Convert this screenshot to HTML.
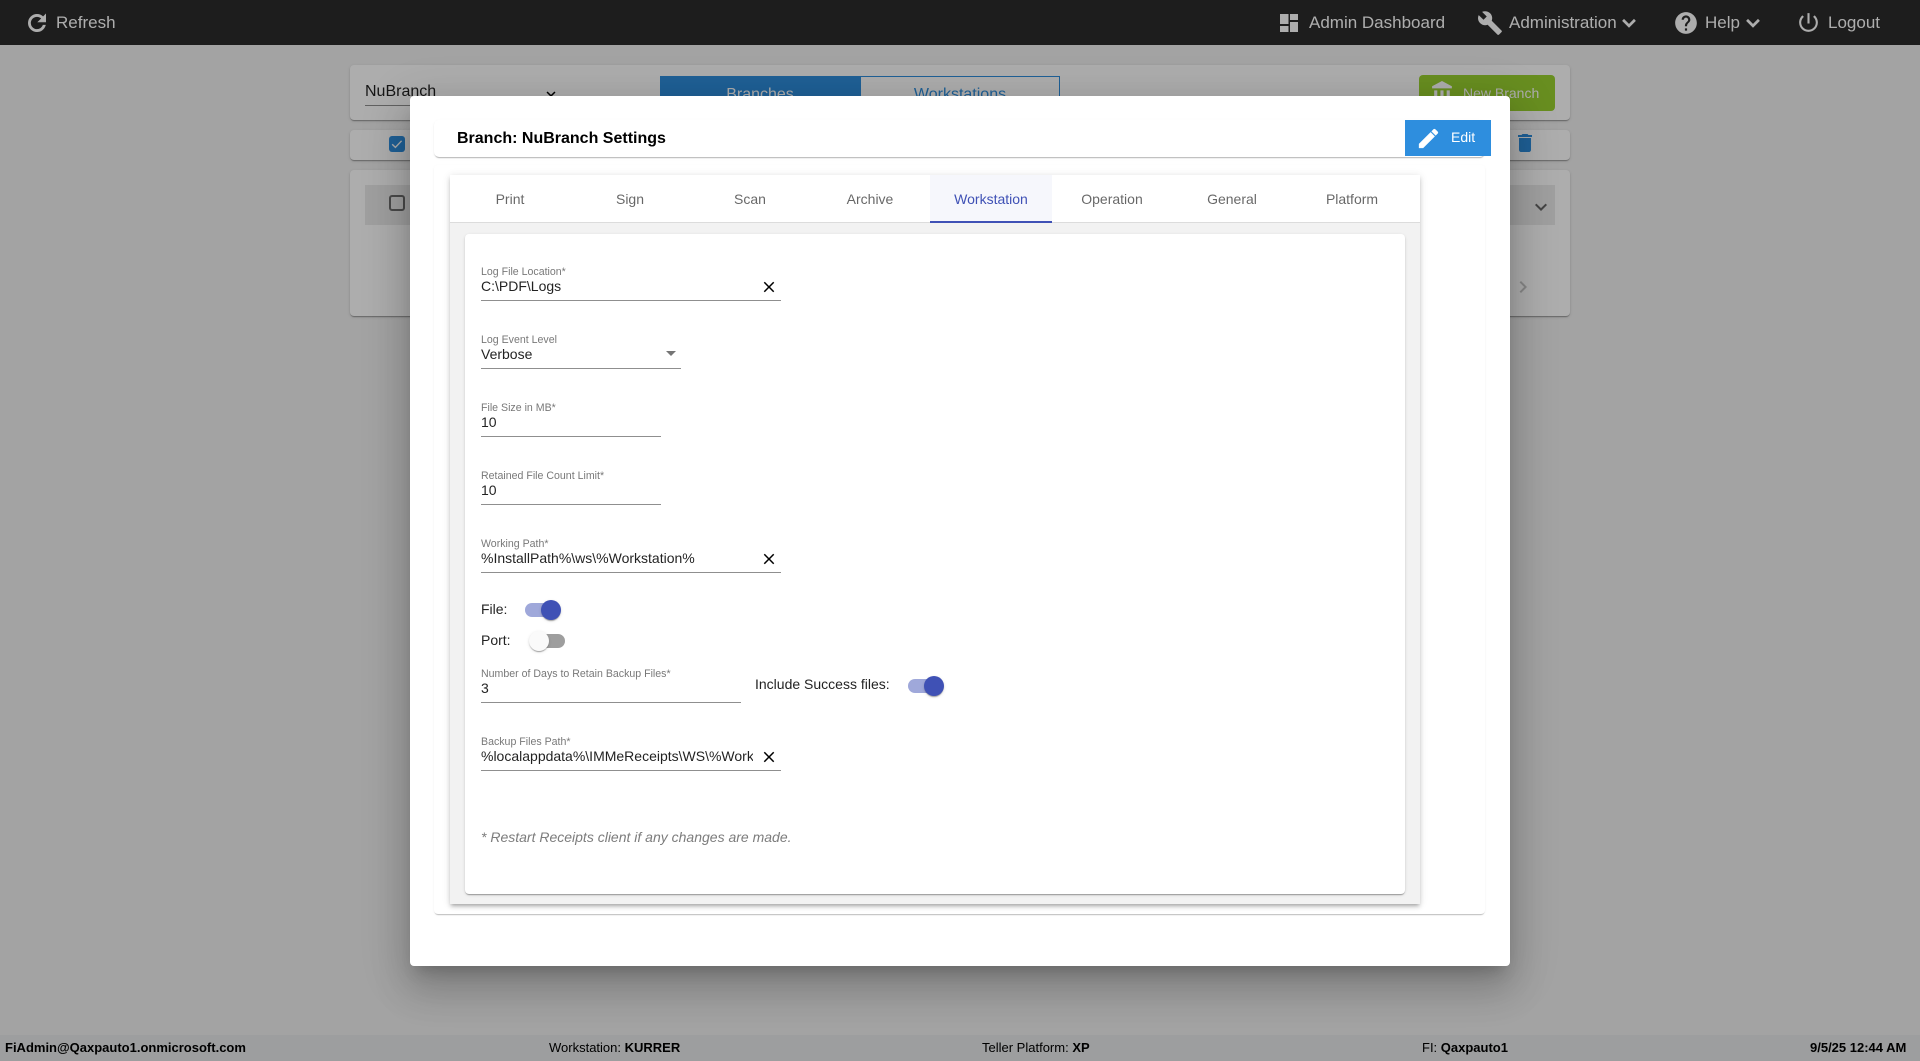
<!DOCTYPE html>
<html>
<head>
<meta charset="utf-8">
<title>Branch Settings</title>
<style>
html,body{margin:0;padding:0;width:1920px;height:1061px;overflow:hidden;background:#f0f0f0;font-family:"Liberation Sans",Arial,sans-serif;}
*{box-sizing:border-box;}
.a{position:absolute;}
.t{position:absolute;white-space:nowrap;}
svg{position:absolute;display:block;}
.card{position:absolute;background:#fff;border-radius:4px;box-shadow:0 2px 1px -1px rgba(0,0,0,.2),0 1px 1px 0 rgba(0,0,0,.14),0 1px 3px 0 rgba(0,0,0,.12);}
.nav{color:#fff;font-size:17px;line-height:20px;top:13px;}
.tab{position:absolute;top:175px;height:47px;line-height:48px;text-align:center;font-size:14px;color:rgba(0,0,0,.6);}
.lab{position:absolute;left:481px;font-size:10.6px;line-height:12px;color:rgba(0,0,0,.54);white-space:nowrap;}
.val{position:absolute;left:481px;font-size:14px;line-height:16px;color:rgba(0,0,0,.87);white-space:nowrap;}
.ul{position:absolute;left:481px;height:1px;background:#8f8f8f;}
.foot{position:absolute;top:1040px;font-size:13px;line-height:15px;color:#000;white-space:nowrap;}
.track{position:absolute;width:34px;height:14px;border-radius:7px;}
.thumb{position:absolute;width:20px;height:20px;border-radius:50%;box-shadow:0 2px 1px -1px rgba(0,0,0,.2),0 1px 1px 0 rgba(0,0,0,.14),0 1px 3px 0 rgba(0,0,0,.12);}
</style>
</head>
<body>
<!-- page beneath overlay -->
<div class="a" style="left:0;top:0;width:1920px;height:45px;background:#2c2c2c;"></div>
<svg style="left:24px;top:10px" width="26" height="26" viewBox="0 0 24 24" fill="#fff" stroke="#fff" stroke-width=".6"><path d="M17.65 6.35C16.2 4.9 14.21 4 12 4c-4.42 0-7.99 3.58-7.99 8s3.57 8 7.99 8c3.73 0 6.84-2.55 7.73-6h-2.08c-.82 2.33-3.04 4-5.65 4-3.31 0-6-2.69-6-6s2.69-6 6-6c1.66 0 3.14.69 4.22 1.78L13 11h7V4l-2.35 2.35z"/></svg>
<div class="t nav" style="left:56px">Refresh</div>
<svg style="left:1277px;top:11px" width="24" height="24" viewBox="0 0 24 24" fill="#fff"><path d="M3 13h8.5V3H3v10zm0 8h8.5v-6H3v6zm10 0h8V11h-8v10zm0-18v6h8V3h-8z"/></svg>
<div class="t nav" style="left:1309px">Admin Dashboard</div>
<svg style="left:1477px;top:10px" width="26" height="26" viewBox="0 0 24 24" fill="#fff"><path d="M22.7 19l-9.1-9.1c.9-2.3.4-5-1.5-6.9-2-2-5-2.4-7.4-1.3L9 6 6 9 1.6 4.7C.4 7.1.9 10.1 2.9 12.1c1.9 1.9 4.6 2.4 6.9 1.5l9.1 9.1c.4.4 1 .4 1.4 0l2.3-2.3c.5-.4.5-1.1.1-1.4z"/></svg>
<div class="t nav" style="left:1509px">Administration</div>
<svg style="left:1616px;top:10px" width="26" height="26" viewBox="0 0 24 24" fill="#fff" stroke="#fff" stroke-width=".5"><path d="M7.41 8.59L12 13.17l4.59-4.58L18 10l-6 6-6-6z"/></svg>
<svg style="left:1673px;top:10px" width="26" height="26" viewBox="0 0 24 24" fill="#fff"><path d="M12 2C6.48 2 2 6.48 2 12s4.48 10 10 10 10-4.48 10-10S17.52 2 12 2zm1 17h-2v-2h2v2zm2.07-7.75l-.9.92C13.45 12.9 13 13.5 13 15h-2v-.5c0-1.1.45-2.1 1.17-2.83l1.24-1.26c.37-.36.59-.86.59-1.41 0-1.1-.9-2-2-2s-2 .9-2 2H8c0-2.21 1.79-4 4-4s4 1.79 4 4c0 .88-.36 1.68-.93 2.25z"/></svg>
<div class="t nav" style="left:1705px">Help</div>
<svg style="left:1740px;top:10px" width="26" height="26" viewBox="0 0 24 24" fill="#fff" stroke="#fff" stroke-width=".5"><path d="M7.41 8.59L12 13.17l4.59-4.58L18 10l-6 6-6-6z"/></svg>
<svg style="left:1796px;top:10px" width="25" height="25" viewBox="0 0 24 24" fill="#fff"><path d="M13 3h-2v10h2V3zm4.83 2.17l-1.42 1.42C17.99 7.86 19 9.81 19 12c0 3.87-3.13 7-7 7s-7-3.13-7-7c0-2.19 1.01-4.14 2.58-5.42L6.17 5.17C4.23 6.82 3 9.26 3 12c0 4.97 4.03 9 9 9s9-4.03 9-9c0-2.74-1.23-5.18-3.17-6.83z"/></svg>
<div class="t nav" style="left:1828px">Logout</div>

<div class="card" style="left:350px;top:65px;width:1220px;height:55px"></div>
<div class="card" style="left:350px;top:130px;width:1220px;height:30px"></div>
<div class="card" style="left:350px;top:170px;width:1220px;height:146px"></div>
<div class="a" style="left:365px;top:185px;width:1190px;height:40px;background:#eaeaea"></div>
<div class="t" style="left:365px;top:82px;font-size:16px;line-height:20px;color:rgba(0,0,0,.87)">NuBranch</div>
<div class="a" style="left:365px;top:105px;width:195px;height:1px;background:#8f8f8f"></div>
<svg style="left:542px;top:85px" width="18" height="18" viewBox="0 0 24 24" fill="#000"><path d="M7.41 8.59L12 13.17l4.59-4.58L18 10l-6 6-6-6z"/></svg>
<div class="a" style="left:660px;top:76px;width:200px;height:40px;background:#2e8ede;color:#fff;font-size:16px;line-height:38px;text-align:center">Branches</div>
<div class="a" style="left:860px;top:76px;width:200px;height:40px;background:#fff;border:1px solid #2e8ede;color:#2e8ede;font-size:16px;line-height:36px;text-align:center">Workstations</div>
<div class="a" style="left:1419px;top:75px;width:136px;height:36px;background:#9ad230;border-radius:4px"></div>
<svg style="left:1430px;top:80px" width="25" height="25" viewBox="0 0 24 24" fill="#fff"><path d="M4 10v7h3v-7H4zm6 0v7h3v-7h-3zM2 22h19v-3H2v3zm14-12v7h3v-7h-3zm-4.5-9L2 6v2h19V6l-9.5-5z"/></svg>
<div class="t" style="left:1463px;top:85px;font-size:14px;line-height:16px;color:#fff">New Branch</div>
<div class="a" style="left:389px;top:136px;width:16px;height:16px;background:#2e8ede;border-radius:3px"></div>
<svg style="left:389px;top:136px" width="16" height="16" viewBox="0 0 16 16"><path d="M3.2 8.2l3.2 3.2 6.2-6.6" fill="none" stroke="#fff" stroke-width="1.4"/></svg>
<div class="a" style="left:389px;top:195px;width:16px;height:16px;border:2px solid #6e6e6e;border-radius:3px"></div>
<svg style="left:1513px;top:131px" width="24" height="24" viewBox="0 0 24 24" fill="#2e8ede"><path d="M6 19c0 1.1.9 2 2 2h8c1.1 0 2-.9 2-2V7H6v12zM19 4h-3.5l-1-1h-5l-1 1H5v2h14V4z"/></svg>
<svg style="left:1529px;top:195px" width="24" height="24" viewBox="0 0 24 24" fill="#666"><path d="M7.41 8.59L12 13.17l4.59-4.58L18 10l-6 6-6-6z"/></svg>
<svg style="left:1511px;top:275px" width="24" height="24" viewBox="0 0 24 24" fill="#c6c6c6"><path d="M10 6L8.59 7.41 13.17 12l-4.58 4.59L10 18l6-6z"/></svg>

<div class="a" style="left:0;top:1035px;width:1920px;height:26px;background:#e7e9ea"></div>
<div class="foot" style="left:5px;font-weight:bold">FiAdmin@Qaxpauto1.onmicrosoft.com</div>
<div class="foot" style="left:549px">Workstation: <b>KURRER</b></div>
<div class="foot" style="left:982px">Teller Platform: <b>XP</b></div>
<div class="foot" style="left:1422px">FI: <b>Qaxpauto1</b></div>
<div class="foot" style="left:1810px;font-weight:bold">9/5/25 12:44 AM</div>

<!-- overlay -->
<div class="a" style="left:0;top:0;width:1920px;height:1061px;background:rgba(0,0,0,.32)"></div>

<!-- modal -->
<div class="a" style="left:410px;top:96px;width:1100px;height:870px;background:#fff;border-radius:4px;box-shadow:0 11px 15px -7px rgba(0,0,0,.2),0 24px 38px 3px rgba(0,0,0,.14),0 9px 46px 8px rgba(0,0,0,.12)"></div>

<div class="a" style="left:434px;top:120px;width:1051px;height:37px;background:#fff;border-radius:5px;box-shadow:0 2px 1px -1px rgba(0,0,0,.2),0 1px 1px 0 rgba(0,0,0,.08),0 1px 3px 0 rgba(0,0,0,.05)"></div>
<div class="t" style="left:457px;top:130px;font-size:16px;line-height:18px;font-weight:bold;color:#000">Branch: NuBranch Settings</div>
<div class="a" style="left:1405px;top:120px;width:86px;height:36px;background:#2e8ede"></div>
<svg style="left:1416px;top:126px" width="25" height="25" viewBox="0 0 24 24" fill="#fff" stroke="#fff" stroke-width=".5"><path d="M3 17.25V21h3.75L17.81 9.94l-3.75-3.75L3 17.25zM20.71 7.04c.39-.39.39-1.02 0-1.41l-2.34-2.34c-.39-.39-1.02-.39-1.41 0l-1.83 1.83 3.75 3.75 1.83-1.83z"/></svg>
<div class="t" style="left:1451px;top:129px;font-size:14px;line-height:16px;color:#fff">Edit</div>

<div class="a" style="left:434px;top:165px;width:1051px;height:749px;background:#fff;border-radius:4px;box-shadow:0 2px 1px -1px rgba(0,0,0,.2),0 1px 1px 0 rgba(0,0,0,.05),0 1px 3px 0 rgba(0,0,0,.04)"></div>
<div class="a" style="left:450px;top:175px;width:970px;height:729px;background:#f2f2f2;box-shadow:0 3px 3px -2px rgba(0,0,0,.2),0 3px 4px 0 rgba(0,0,0,.14),0 1px 8px 0 rgba(0,0,0,.12)"></div>
<div class="a" style="left:450px;top:175px;width:970px;height:48px;background:#fff;border-bottom:1px solid #dcdcdc"></div>
<div class="a" style="left:930px;top:175px;width:122px;height:48px;background:#f6f7fc;border-bottom:2px solid #3f51b5"></div>
<div class="tab" style="left:450px;width:120px">Print</div>
<div class="tab" style="left:570px;width:120px">Sign</div>
<div class="tab" style="left:690px;width:120px">Scan</div>
<div class="tab" style="left:810px;width:120px">Archive</div>
<div class="tab" style="left:930px;width:122px;color:#3f51b5">Workstation</div>
<div class="tab" style="left:1052px;width:120px">Operation</div>
<div class="tab" style="left:1172px;width:120px">General</div>
<div class="tab" style="left:1292px;width:120px">Platform</div>

<div class="card" style="left:465px;top:234px;width:940px;height:660px"></div>

<div class="lab" style="top:266px">Log File Location*</div>
<div class="val" style="top:278px">C:\PDF\Logs</div>
<div class="ul" style="top:300px;width:300px"></div>
<svg style="left:760px;top:278px" width="18" height="18" viewBox="0 0 24 24" fill="#000"><path d="M19 6.41L17.59 5 12 10.59 6.41 5 5 6.41 10.59 12 5 17.59 6.41 19 12 13.41 17.59 19 19 17.59 13.41 12z"/></svg>

<div class="lab" style="top:334px">Log Event Level</div>
<div class="val" style="top:346px">Verbose</div>
<div class="ul" style="top:368px;width:200px"></div>
<div class="a" style="left:666px;top:351px;width:0;height:0;border-left:5px solid transparent;border-right:5px solid transparent;border-top:5px solid #757575"></div>

<div class="lab" style="top:402px">File Size in MB*</div>
<div class="val" style="top:414px">10</div>
<div class="ul" style="top:436px;width:180px"></div>

<div class="lab" style="top:470px">Retained File Count Limit*</div>
<div class="val" style="top:482px">10</div>
<div class="ul" style="top:504px;width:180px"></div>

<div class="lab" style="top:538px">Working Path*</div>
<div class="val" style="top:550px">%InstallPath%\ws\%Workstation%</div>
<div class="ul" style="top:572px;width:300px"></div>
<svg style="left:760px;top:550px" width="18" height="18" viewBox="0 0 24 24" fill="#000"><path d="M19 6.41L17.59 5 12 10.59 6.41 5 5 6.41 10.59 12 5 17.59 6.41 19 12 13.41 17.59 19 19 17.59 13.41 12z"/></svg>

<div class="val" style="top:601px;font-size:14px">File:</div>
<div class="track" style="left:525px;top:603px;background:#9fa8da"></div>
<div class="thumb" style="left:541px;top:600px;background:#3f51b5"></div>

<div class="val" style="top:632px">Port:</div>
<div class="track" style="left:531px;top:634px;background:#9e9e9e"></div>
<div class="thumb" style="left:529px;top:631px;background:#fafafa"></div>

<div class="lab" style="top:668px">Number of Days to Retain Backup Files*</div>
<div class="val" style="top:680px">3</div>
<div class="ul" style="top:702px;width:260px"></div>
<div class="t" style="left:755px;top:676px;font-size:14px;line-height:16px;color:rgba(0,0,0,.87)">Include Success files:</div>
<div class="track" style="left:908px;top:679px;background:#9fa8da"></div>
<div class="thumb" style="left:924px;top:676px;background:#3f51b5"></div>

<div class="lab" style="top:736px">Backup Files Path*</div>
<div class="val" style="top:748px;width:272px;overflow:hidden">%localappdata%\IMMeReceipts\WS\%Workstation%</div>
<div class="ul" style="top:770px;width:300px"></div>
<svg style="left:760px;top:748px" width="18" height="18" viewBox="0 0 24 24" fill="#000"><path d="M19 6.41L17.59 5 12 10.59 6.41 5 5 6.41 10.59 12 5 17.59 6.41 19 12 13.41 17.59 19 19 17.59 13.41 12z"/></svg>

<div class="t" style="left:481px;top:829px;font-size:14px;line-height:16px;font-style:italic;color:#7c7c7c">* Restart Receipts client if any changes are made.</div>
</body>
</html>
